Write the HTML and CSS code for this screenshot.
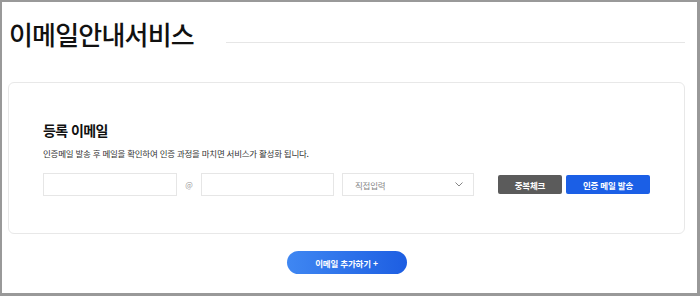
FILE: index.html
```html
<!DOCTYPE html>
<html lang="ko">
<head>
<meta charset="utf-8">
<title>이메일안내서비스</title>
<link rel="stylesheet" href="styles.css">
</head>
<body>
<div class="frame">
  <header class="header">
    <h1 class="title">이메일안내서비스</h1>
    <div class="rule"></div>
  </header>
  <section class="card">
    <h2 class="card-title">등록 이메일</h2>
    <p class="desc">인증메일 발송 후 메일을 확인하여 인증 과정을 마치면 서비스가 활성화 됩니다.</p>
    <div class="form-row">
      <input class="field field-id" type="text">
      <span class="at">@</span>
      <input class="field field-domain" type="text">
      <div class="select">
        <span class="select-text">직접입력</span>
        <svg class="chevron" width="8" height="5" viewBox="0 0 8 5"><path d="M0.5 0.5 L4 4 L7.5 0.5" fill="none" stroke="#777" stroke-width="0.9"/></svg>
      </div>
      <button class="btn btn-gray" type="button">중복체크</button>
      <button class="btn btn-blue" type="button">인증 메일 발송</button>
    </div>
  </section>
  <div class="add-wrap">
    <button class="add-btn" type="button">이메일 추가하기 +</button>
  </div>
</div>
</body>
</html>
```

FILE: styles.css
```css
* { box-sizing: border-box; }
html, body { margin: 0; padding: 0; background: #fff; }
body {
  font-family: "Noto Sans CJK KR", "Noto Sans", sans-serif;
  color: #111;
}
.frame {
  width: 700px;
  height: 296px;
  border-style: solid;
  border-color: #999;
  border-width: 2px 3px 3px 2px;
  background: #fff;
}
.header {
  display: flex;
  align-items: flex-end;
  padding: 16px 12px 0 7px;
}
.title {
  margin: 0;
  font-size: 26px;
  font-weight: 500;
  line-height: 32px;
  letter-spacing: -0.8px;
  color: #111;
}
.rule {
  flex: 1;
  height: 1px;
  background: #e6e6e6;
  margin: 0 0 7px 32px;
}
.card {
  margin: 32px 12px 0 6px;
  height: 152px;
  border: 1px solid #e8e8e8;
  border-radius: 6px;
  padding: 37px 0 0 34px;
}
.card-title {
  margin: 0;
  font-size: 14px;
  font-weight: 700;
  line-height: 20px;
  letter-spacing: -0.6px;
  color: #111;
}
.desc {
  margin: 7px 0 0;
  font-size: 8.5px;
  line-height: 12px;
  letter-spacing: -0.25px;
  color: #333;
}
.form-row {
  display: flex;
  align-items: center;
  margin-top: 14px;
}
.field {
  height: 23px;
  border: 1px solid #e6e6e6;
  border-radius: 0;
  padding: 0;
  margin: 0;
  background: #fff;
  outline: none;
}
.field-id { width: 134px; }
.field-domain { width: 133px; }
.at {
  width: 24px;
  text-align: center;
  font-size: 8px;
  color: #999;
}
.select {
  width: 132px;
  height: 23px;
  margin-left: 8px;
  border: 1px solid #e6e6e6;
  display: flex;
  align-items: center;
  justify-content: space-between;
  padding: 0 10px 0 12px;
}
.select-text {
  font-size: 8.5px;
  color: #888;
  letter-spacing: -0.2px;
}
.chevron { display: block; }
.btn {
  height: 19px;
  border: 0;
  border-radius: 2px;
  color: #fff;
  font-family: inherit;
  font-size: 8.5px;
  font-weight: 700;
  padding: 0;
  letter-spacing: -0.2px;
}
.btn-gray {
  width: 64px;
  margin-left: 24px;
  background: #5b5b5b;
}
.btn-blue {
  width: 84px;
  margin-left: 4px;
  background: #1b5fe6;
}
.add-wrap {
  display: flex;
  justify-content: center;
  margin: 17px 12px 0 6px;
}
.add-btn {
  width: 120px;
  height: 23px;
  border: 0;
  border-radius: 12px;
  background: linear-gradient(90deg, #3f87f2 0%, #1d5ee2 100%);
  color: #fff;
  font-family: inherit;
  font-size: 8.5px;
  font-weight: 700;
  letter-spacing: -0.2px;
  padding: 0;
}
```
